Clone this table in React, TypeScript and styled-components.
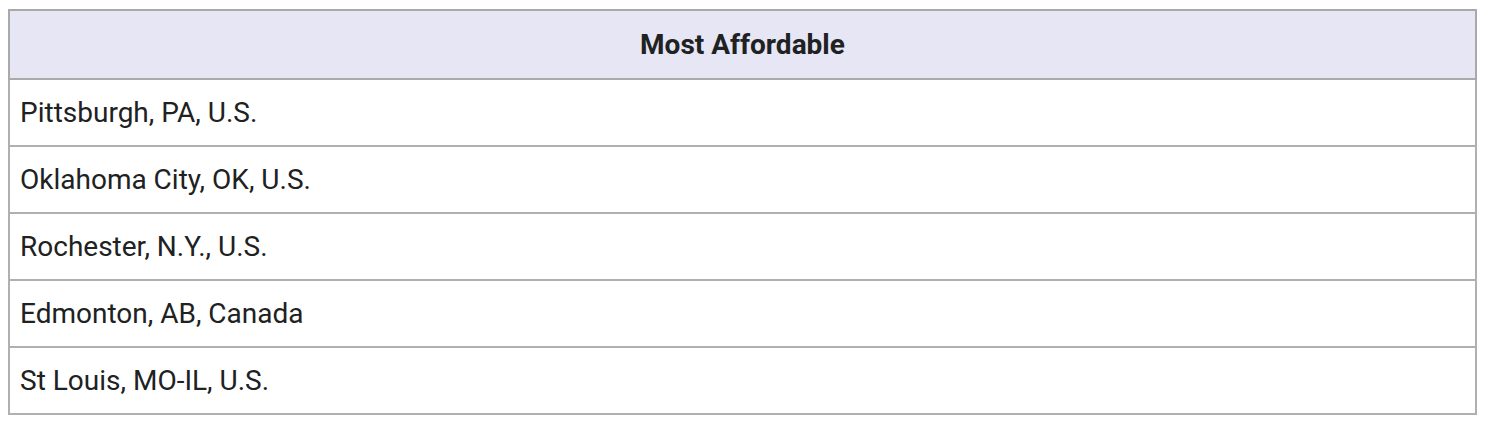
import styled, { createGlobalStyle } from "styled-components";

const GlobalStyle = createGlobalStyle`
  body {
    margin: 0;
    padding: 9px 8px 8px 8px;
    background: #ffffff;
    font-family: Roboto, "Liberation Sans", sans-serif;
    color: #202122;
  }
`;

const cities = [
  "Pittsburgh, PA, U.S.",
  "Oklahoma City, OK, U.S.",
  "Rochester, N.Y., U.S.",
  "Edmonton, AB, Canada",
  "St Louis, MO-IL, U.S.",
];

const App = () => {
  return (
    <>
      <GlobalStyle />
      <Table>
        <thead>
          <tr>
            <HeadCell>Most Affordable</HeadCell>
          </tr>
        </thead>
        <tbody>
          {cities.map((city) => (
            <tr key={city}>
              <Cell>{city}</Cell>
            </tr>
          ))}
        </tbody>
      </Table>
    </>
  );
};

export default App;

const Table = styled.table`
  width: 1469px;
  border-collapse: collapse;
  border: 2px solid #a9a9a9;
  font-size: 28px;
  line-height: 1.25;
`;

const HeadCell = styled.th`
  height: 69px;
  padding: 0 10px;
  box-sizing: border-box;
  background: #e6e6f4;
  border: 2px solid #a9a9a9;
  font-weight: 700;
  text-align: center;
  color: #202122;
`;

const Cell = styled.td`
  height: 67px;
  padding: 0 10px;
  box-sizing: border-box;
  border: 2px solid #b0b0b0;
  text-align: left;
  vertical-align: middle;
`;
